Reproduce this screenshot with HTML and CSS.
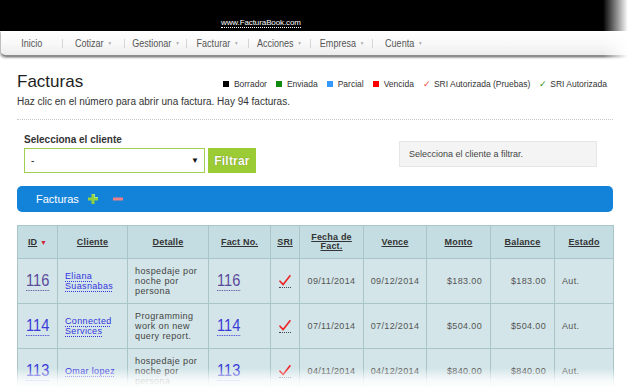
FILE: index.html
```html
<!DOCTYPE html>
<html lang="es">
<head>
<meta charset="utf-8">
<title>Facturas</title>
<link rel="stylesheet" href="styles.css">
</head>
<body>
<div class="page">
  <header class="topbar"><a class="site">www.FacturaBook.com</a></header>
  <nav class="nav">
    <span class="nav-item"><span class="nav-txt">Inicio</span></span><span class="nav-sep"></span>
    <span class="nav-item"><span class="nav-txt">Cotizar<i class="caret">▼</i></span></span><span class="nav-sep"></span>
    <span class="nav-item"><span class="nav-txt">Gestionar<i class="caret">▼</i></span></span><span class="nav-sep"></span>
    <span class="nav-item"><span class="nav-txt">Facturar<i class="caret">▼</i></span></span><span class="nav-sep"></span>
    <span class="nav-item"><span class="nav-txt">Acciones<i class="caret">▼</i></span></span><span class="nav-sep"></span>
    <span class="nav-item"><span class="nav-txt">Empresa<i class="caret">▼</i></span></span><span class="nav-sep"></span>
    <span class="nav-item"><span class="nav-txt">Cuenta<i class="caret">▼</i></span></span>
  </nav>

  <main class="main">
    <div class="titlerow">
      <h1 class="title">Facturas</h1>
      <ul class="legend">
        <li><span class="sq sq-black"></span>Borrador</li>
        <li><span class="sq sq-green"></span>Enviada</li>
        <li><span class="sq sq-blue"></span>Parcial</li>
        <li><span class="sq sq-red"></span>Vencida</li>
        <li><span class="lg-check red">✓</span>SRI Autorizada (Pruebas)</li>
        <li><span class="lg-check green">✓</span>SRI Autorizada</li>
      </ul>
    </div>
    <p class="hint">Haz clic en el número para abrir una factura. Hay 94 facturas.</p>
    <div class="dots"></div>

    <div class="filter">
      <div class="field">
        <div class="label">Selecciona el cliente</div>
        <div class="controls">
          <div class="select"><span>-</span><span class="sel-arrow">▼</span></div>
          <div class="btn">Filtrar</div>
        </div>
      </div>
      <div class="info">Selecciona el cliente a filtrar.</div>
    </div>

    <div class="bar">
      <span class="bar-title">Facturas</span>
      <svg class="plus" width="10" height="10" viewBox="0 0 10 10"><path d="M3.5 0h3v3.5H10v3H6.5V10h-3V6.5H0v-3h3.5z" fill="#8fd13f"/><path d="M3.5 0h3v3.5H10" fill="none" stroke="#c8f08a" stroke-width="0.8"/></svg>
      <svg class="minus" width="10" height="4" viewBox="0 0 10 4"><rect x="0" y="0.5" width="10" height="3" fill="#ef7f86"/></svg>
    </div>

    <table class="grid">
      <colgroup>
        <col class="c-id"><col class="c-cli"><col class="c-det"><col class="c-fact"><col class="c-sri">
        <col class="c-date"><col class="c-date2"><col class="c-amt"><col class="c-amt"><col class="c-est">
      </colgroup>
      <thead>
        <tr>
          <th><u>ID</u> <span class="sort">▼</span></th>
          <th><u>Cliente</u></th>
          <th><u>Detalle</u></th>
          <th><u>Fact No.</u></th>
          <th><u>SRI</u></th>
          <th><u>Fecha de Fact.</u></th>
          <th><u>Vence</u></th>
          <th><u>Monto</u></th>
          <th><u>Balance</u></th>
          <th><u>Estado</u></th>
        </tr>
      </thead>
      <tbody>
        <tr>
          <td class="num"><a class="big visited">116</a></td>
          <td class="cli"><a class="client">Eliana Suasnabas</a></td>
          <td class="det">hospedaje por noche por persona</td>
          <td class="num"><a class="big visited">116</a></td>
          <td class="sri"><span class="chk"><svg width="12" height="11" viewBox="0 0 12 11"><path d="M1 6.2L4.2 9.6L11 0.8" fill="none" stroke="#ee2222" stroke-width="1.6" stroke-linecap="round" stroke-linejoin="round"/></svg></span></td>
          <td class="date">09/11/2014</td>
          <td class="date">09/12/2014</td>
          <td class="amt">$183.00</td>
          <td class="amt">$183.00</td>
          <td class="est">Aut.</td>
        </tr>
        <tr>
          <td class="num"><a class="big">114</a></td>
          <td class="cli"><a class="client">Connected Services</a></td>
          <td class="det">Programming work on new query report.</td>
          <td class="num"><a class="big">114</a></td>
          <td class="sri"><span class="chk"><svg width="12" height="11" viewBox="0 0 12 11"><path d="M1 6.2L4.2 9.6L11 0.8" fill="none" stroke="#ee2222" stroke-width="1.6" stroke-linecap="round" stroke-linejoin="round"/></svg></span></td>
          <td class="date">07/11/2014</td>
          <td class="date">07/12/2014</td>
          <td class="amt">$504.00</td>
          <td class="amt">$504.00</td>
          <td class="est">Aut.</td>
        </tr>
        <tr>
          <td class="num"><a class="big">113</a></td>
          <td class="cli"><a class="client">Omar lopez</a></td>
          <td class="det">hospedaje por noche por persona</td>
          <td class="num"><a class="big">113</a></td>
          <td class="sri"><span class="chk"><svg width="12" height="11" viewBox="0 0 12 11"><path d="M1 6.2L4.2 9.6L11 0.8" fill="none" stroke="#ee2222" stroke-width="1.6" stroke-linecap="round" stroke-linejoin="round"/></svg></span></td>
          <td class="date">04/11/2014</td>
          <td class="date">04/12/2014</td>
          <td class="amt">$840.00</td>
          <td class="amt">$840.00</td>
          <td class="est">Aut.</td>
        </tr>
      </tbody>
    </table>
  </main>

  <div class="fade-right"></div>
  <div class="fade-bottom"></div>
</div>
</body>
</html>
```

FILE: styles.css
```css
* { box-sizing: border-box; margin: 0; padding: 0; }
html, body { width: 630px; height: 388px; overflow: hidden; background: #fff; }
body { font-family: "Liberation Sans", Arial, sans-serif; color: #333; }
.page { position: relative; width: 630px; height: 388px; overflow: hidden; }

/* top bar */
.topbar { height: 31px; background: #000; padding: 11px 0 0 221px; }
.site { display: inline-block; color: #fff; font-size: 8px; line-height: 9px; border-bottom: 1px dotted #fff; letter-spacing: -0.1px; }

/* nav */
.nav {
  display: flex; align-items: center;
  height: 26px; margin-left: 1px;
  background: linear-gradient(#ffffff, #f8f8f8 55%, #ececec);
  border-bottom: 2px solid #8c8c8c;
  border-radius: 0 0 0 5px;
  box-shadow: -1px 1px 2px rgba(0,0,0,0.35);
  font-size: 11px; color: #555;
}
.nav-item { width: 61px; display: flex; justify-content: center; white-space: nowrap; }
.nav-txt { display: inline-block; transform: scaleX(0.82); transform-origin: center; }
.nav-sep { width: 1px; height: 9px; background: #d6d6d6; }
.caret { font-style: normal; font-size: 5px; color: #a5a5a5; margin-left: 5px; vertical-align: 2px; }

/* main */
.main { padding: 0 17px; }
.titlerow { display: flex; align-items: baseline; margin-top: 15px; }
.title { font-size: 17px; line-height: 20px; font-weight: normal; color: #1e1e1e; }
.legend { list-style: none; display: flex; gap: 9px; margin-left: auto; margin-right: 6px; font-size: 8.5px; color: #333; }
.legend li { display: flex; align-items: center; white-space: nowrap; }
.sq { display: inline-block; width: 6px; height: 6px; margin-right: 5px; }
.sq-black { background: #000; }
.sq-green { background: #108a10; }
.sq-blue { background: #3399ff; }
.sq-red { background: #ff0000; }
.lg-check { font-size: 9px; margin-right: 3px; line-height: 9px; }
.lg-check.red { color: #f04040; }
.lg-check.green { color: #2f8f1f; }

.hint { font-size: 10px; line-height: 12px; color: #333; margin-top: 4px; }
.dots { border-top: 1px dotted #c8c8c8; margin-top: 11px; }

/* filter */
.filter { display: flex; align-items: flex-start; margin-top: 14px; padding-left: 7px; }
.label { font-size: 10px; line-height: 12px; font-weight: bold; color: #333; margin-bottom: 2px; }
.controls { display: flex; gap: 3px; }
.select {
  width: 181px; height: 25px; border: 1px solid #9fd050; background: #fff;
  display: flex; align-items: center; justify-content: space-between;
  padding: 0 5px 0 6px; font-size: 10px; color: #222;
}
.sel-arrow { font-size: 8px; color: #111; }
.btn {
  width: 48px; height: 25px; background: #9ccc35; color: #fff;
  font-weight: bold; font-size: 12px; letter-spacing: 0.2px;
  display: flex; align-items: center; justify-content: center;
  text-shadow: 0 0 1px rgba(60,80,0,0.7);
}
.info {
  margin-left: auto; margin-right: 16px; margin-top: 7px;
  width: 198px; height: 26px; background: #f4f4f4; border: 1px solid #e6e6e6;
  font-size: 9px; color: #444; padding-left: 9px;
  display: flex; align-items: center;
}

/* blue bar */
.bar {
  margin-top: 13px; height: 26px; background: #1383da; border-radius: 5px;
  display: flex; align-items: center; padding-left: 19px; color: #fff;
}
.bar-title { font-size: 11px; }
.plus { margin-left: 9px; }
.minus { margin-left: 15px; }

/* table */
.grid { margin-top: 13px; width: 596px; border-collapse: collapse; table-layout: fixed; }
.c-id { width: 40px; } .c-cli { width: 70px; } .c-det { width: 81px; } .c-fact { width: 62px; }
.c-sri { width: 29px; } .c-date { width: 64px; } .c-date2 { width: 63px; } .c-amt { width: 64px; } .c-est { width: 59px; }
.grid th, .grid td { border: 1px solid #a9c5ca; }
.grid th {
  background: #c4dde2; height: 33px; padding: 0 4px;
  font-size: 9px; line-height: 9px; font-weight: bold; color: #333; letter-spacing: 0.2px;
  vertical-align: middle; text-align: center;
}
.grid th u { text-underline-offset: 1px; }
.sort { color: #d0263a; font-size: 7px; text-decoration: none; }
.grid td {
  background: #d3e5e8; height: 45px; padding: 0 7px;
  font-size: 9px; line-height: 10px; color: #555; letter-spacing: 0.35px; vertical-align: middle;
}
.num { padding-left: 8px !important; }
.big {
  display: inline-block; transform: scaleX(0.86); transform-origin: left center;
  font-size: 17px; line-height: 18px; color: #3b3bd8; letter-spacing: 0;
  border-bottom: 1px dotted currentColor; padding-bottom: 0;
}
.big.visited { color: #5a4a9c; }
.client { color: #3434e0; text-decoration: underline dotted; text-underline-offset: 1.5px; }
.det { color: #444 !important; letter-spacing: 0.4px !important; }
.sri { text-align: center; padding: 0 !important; }
.chk { display: inline-block; border-bottom: 1px dotted #445; padding-bottom: 1px; line-height: 0; }
.date { text-align: center; padding: 0 4px !important; }
.amt { text-align: right; padding-right: 8px !important; }
.est { padding-left: 7px !important; }

/* decorative fades of the captured screenshot */
.fade-right {
  position: absolute; top: 0; right: 0; width: 27px; height: 62px;
  background: linear-gradient(to right, rgba(255,255,255,0), #fff 92%);
}
.fade-bottom {
  position: absolute; left: 0; right: 0; bottom: 0; height: 20px;
  background: linear-gradient(rgba(255,255,255,0), rgba(255,255,255,0.8) 60%, #fff);
}
```
